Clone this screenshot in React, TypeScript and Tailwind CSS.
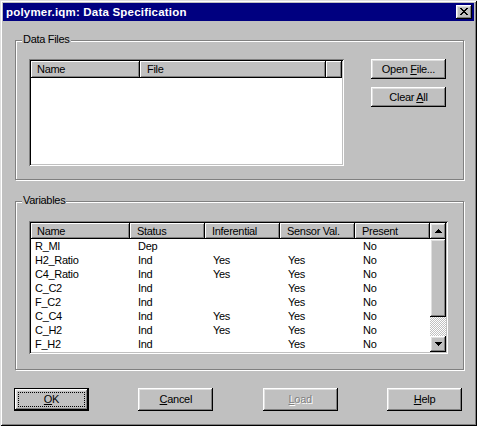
import React from "react";

const RAISED =
  "shadow-[inset_-1px_-1px_0_#000,inset_1px_1px_0_#fff,inset_-2px_-2px_0_#808080,inset_2px_2px_0_#dfdfdf]";
const SUNKEN =
  "shadow-[inset_1px_1px_0_#808080,inset_-1px_-1px_0_#fff,inset_2px_2px_0_#000,inset_-2px_-2px_0_#c0c0c0]";
const HEADER =
  "shadow-[inset_-1px_-1px_0_#000,inset_1px_1px_0_#fff,inset_-2px_-2px_0_#808080]";

function U({ children }: { children: React.ReactNode }) {
  return <span className="underline underline-offset-[1px]">{children}</span>;
}

function Btn({
  children,
  h,
  disabled,
  def,
}: {
  children: React.ReactNode;
  h: string;
  disabled?: boolean;
  def?: boolean;
}) {
  if (def) {
    return (
      <div
        className={`w-[75px] ${h} flex items-center justify-center border border-black bg-[#c0c0c0] shadow-[inset_-1px_-1px_0_#000,inset_1px_1px_0_#fff,inset_-2px_-2px_0_#808080,inset_2px_2px_0_#dfdfdf] p-[3px]`}
      >
        <div className="w-full h-full border border-dotted border-black flex items-center justify-center text-black">
          <span className="whitespace-pre">{children}</span>
        </div>
      </div>
    );
  }
  return (
    <div
      className={`w-[75px] ${h} flex items-center justify-center bg-[#c0c0c0] ${RAISED} ${
        disabled ? "text-[#808080] [text-shadow:1px_1px_0_#fff]" : "text-black"
      }`}
    >
      <span className="whitespace-pre">{children}</span>
    </div>
  );
}

function Group({
  label,
  h,
  mt,
  children,
}: {
  label: string;
  h: string;
  mt: string;
  children: React.ReactNode;
}) {
  return (
    <div
      className={`relative ml-[12px] ${mt} w-[449px] ${h} border border-[#808080] shadow-[inset_1px_1px_0_#fff,1px_1px_0_#fff]`}
    >
      <div className="absolute left-[6px] top-[-8px] bg-[#c0c0c0] px-[1px] leading-[13px]">
        {label}
      </div>
      {children}
    </div>
  );
}

function UpArrow() {
  return (
    <svg width="7" height="4" viewBox="0 0 7 4" shapeRendering="crispEdges">
      <path d="M3 0h1v1h1v1h1v1h1v1H0V3h1V2h1V1h1z" fill="#000" />
    </svg>
  );
}
function DownArrow() {
  return (
    <svg width="7" height="4" viewBox="0 0 7 4" shapeRendering="crispEdges">
      <path d="M0 0h7v1H6v1H5v1H4v1H3V3H2V2H1V1H0z" fill="#000" />
    </svg>
  );
}

function CloseX() {
  const r: [number, number, number][] = [
    [0, 0, 2],
    [6, 0, 2],
    [1, 1, 2],
    [5, 1, 2],
    [2, 2, 4],
    [3, 3, 2],
    [2, 4, 4],
    [1, 5, 2],
    [5, 5, 2],
    [0, 6, 2],
    [6, 6, 2],
  ];
  return (
    <svg width="8" height="7" viewBox="0 0 8 7" shapeRendering="crispEdges">
      {r.map(([x, y, w], i) => (
        <rect key={i} x={x} y={y} width={w} height={1} fill="#000" />
      ))}
    </svg>
  );
}

const rows: [string, string, string, string, string][] = [
  ["R_MI", "Dep", "", "", "No"],
  ["H2_Ratio", "Ind", "Yes", "Yes", "No"],
  ["C4_Ratio", "Ind", "Yes", "Yes", "No"],
  ["C_C2", "Ind", "", "Yes", "No"],
  ["F_C2", "Ind", "", "Yes", "No"],
  ["C_C4", "Ind", "Yes", "Yes", "No"],
  ["C_H2", "Ind", "Yes", "Yes", "No"],
  ["F_H2", "Ind", "", "Yes", "No"],
];

const colW = ["w-[99px]", "w-[75px]", "w-[75px]", "w-[75px]", "w-[75px]"];
const heads = ["Name", "Status", "Inferential", "Sensor Val.", "Present"];

export default function App() {
  return (
    <div className="w-[477px] h-[426px] bg-[#c0c0c0] p-[3px] shadow-[inset_1px_1px_0_#dfdfdf,inset_-1px_-1px_0_#000,inset_2px_2px_0_#fff,inset_-2px_-2px_0_#808080] font-['Liberation_Sans',Arial,sans-serif] text-[11px] tracking-[-0.3px] text-black leading-[13px] select-none">
      {/* Title bar */}
      <div className="h-[18px] bg-[#000080] flex items-center justify-between pl-[3px] pr-[2px]">
        <span className="text-white font-bold text-[11.5px] tracking-[0.2px]">
          polymer.iqm: Data Specification
        </span>
        <div className={`w-[16px] h-[14px] bg-[#c0c0c0] ${RAISED} flex items-center justify-center pr-[1px] pb-[1px]`}>
          <CloseX />
        </div>
      </div>

      {/* Data Files */}
      <Group label="Data Files" h="h-[140px]" mt="mt-[19px]">
        <div className="flex pt-[18px] pl-[13px]">
          <div className={`w-[315px] h-[107px] bg-white p-[2px] ${SUNKEN}`}>
            <div className="flex h-[17px]">
              <div className={`w-[109px] h-full bg-[#c0c0c0] ${HEADER} pl-[6px] flex items-center`}>Name</div>
              <div className={`w-[186px] h-full bg-[#c0c0c0] ${HEADER} pl-[7px] flex items-center`}>File</div>
              <div className={`w-[16px] h-full bg-[#c0c0c0] ${HEADER}`}></div>
            </div>
          </div>
          <div className="ml-[27px] flex flex-col gap-[8px]">
            <Btn h="h-[20px]">
              Open <U>F</U>ile...
            </Btn>
            <Btn h="h-[20px]">
              Clear <U>A</U>ll
            </Btn>
          </div>
        </div>
      </Group>

      {/* Variables */}
      <Group label="Variables" h="h-[169px]" mt="mt-[21px]">
        <div className="pt-[19px] pl-[13px]">
          <div className={`w-[419px] h-[133px] bg-white p-[2px] ${SUNKEN} flex`}>
            <div className="flex flex-col w-[399px]">
              <div className="flex h-[16px]">
                {heads.map((t, i) => (
                  <div
                    key={t}
                    className={`${colW[i]} h-full bg-[#c0c0c0] ${HEADER} ${i === 0 ? "pl-[6px]" : "pl-[7px]"} flex items-center whitespace-nowrap`}
                  >
                    {t}
                  </div>
                ))}
              </div>
              {rows.map((r, ri) => (
                <div key={ri} className="flex h-[14px] items-center">
                  {r.map((c, ci) => (
                    <div key={ci} className={`${colW[ci]} ${ci === 0 ? "pl-[4px]" : "pl-[8px]"} whitespace-nowrap`}>
                      {c}
                    </div>
                  ))}
                </div>
              ))}
            </div>
            <div className="w-[16px] h-full flex flex-col">
              <div className={`h-[16px] bg-[#c0c0c0] ${RAISED} flex items-center justify-center pb-[1px]`}>
                <UpArrow />
              </div>
              <div className={`h-[78px] bg-[#c0c0c0] ${RAISED}`}></div>
              <div className="flex-1 bg-[repeating-conic-gradient(#fff_0_25%,#c0c0c0_0_50%)] bg-[length:2px_2px]"></div>
              <div className={`h-[16px] bg-[#c0c0c0] ${RAISED} flex items-center justify-center pb-[1px]`}>
                <DownArrow />
              </div>
            </div>
          </div>
        </div>
      </Group>

      {/* Bottom buttons */}
      <div className="mt-[18px] ml-[11px] w-[448px] flex justify-between">
        <Btn h="h-[23px]" def>
          <U>O</U>K
        </Btn>
        <Btn h="h-[23px]">
          <U>C</U>ancel
        </Btn>
        <Btn h="h-[23px]" disabled>
          <U>L</U>oad
        </Btn>
        <Btn h="h-[23px]">
          <U>H</U>elp
        </Btn>
      </div>
    </div>
  );
}
